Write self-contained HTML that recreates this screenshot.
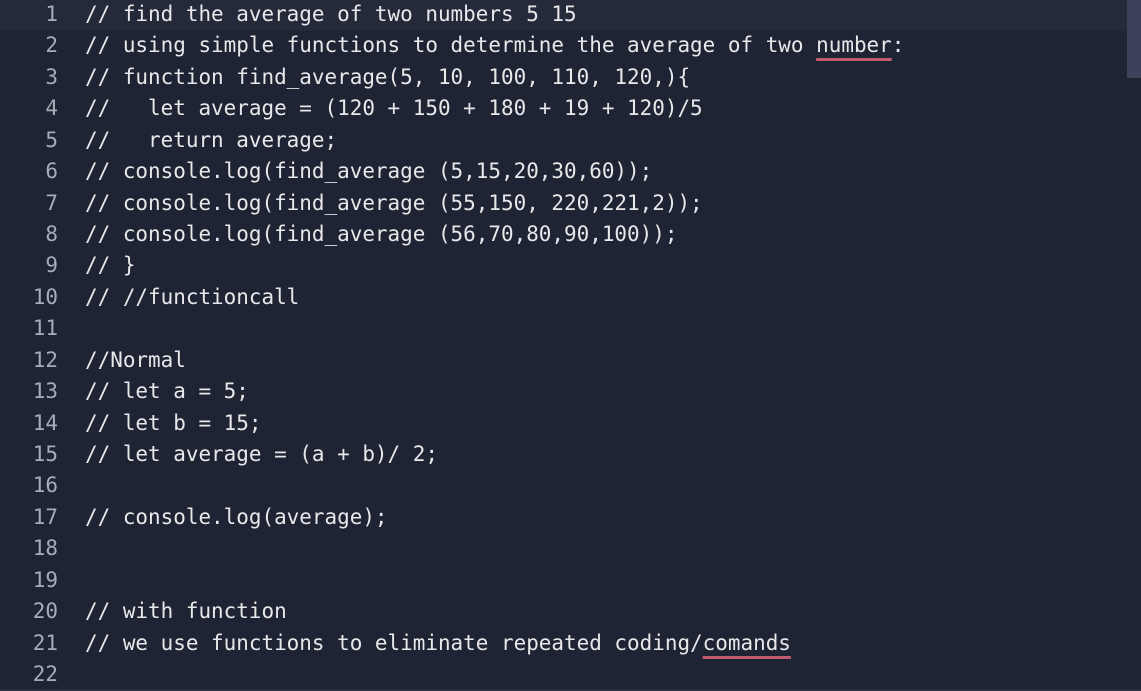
<!DOCTYPE html>
<html><head><meta charset="utf-8"><style>
html,body{margin:0;padding:0;width:1141px;height:691px;overflow:hidden;background:#1e2433;}
.hl{position:absolute;left:0;top:0;width:1127px;height:31px;background:#252a3b;}
.sb{position:absolute;left:1127px;top:0;width:14px;height:78px;background:#3b4259;}
.bot{position:absolute;left:0;top:689px;width:1141px;height:2px;background:#2b3142;}
.ln{position:absolute;left:0;width:58px;text-align:right;color:#a7adb8;}
.tx{position:absolute;left:85px;color:#e8e8ea;white-space:pre;}
.ln,.tx{font-family:"DejaVu Sans Mono","Liberation Mono",monospace;font-size:20.95px;line-height:31.43px;height:31.43px;margin-top:1px;}
.u{text-decoration:underline;text-decoration-color:#c05a6e;text-decoration-thickness:3px;text-underline-offset:6px;}
</style></head><body>
<div class="hl"></div><div class="sb"></div><div class="bot"></div>
<div class="ln" style="top:-2px">1</div><div class="tx" style="top:-2px">// find the average of two numbers 5 15</div>
<div class="ln" style="top:29.4px">2</div><div class="tx" style="top:29.4px">// using simple functions to determine the average of two <span class="u">number</span>:</div>
<div class="ln" style="top:60.9px">3</div><div class="tx" style="top:60.9px">// function find_average(5, 10, 100, 110, 120,){</div>
<div class="ln" style="top:92.3px">4</div><div class="tx" style="top:92.3px">//   let average = (120 + 150 + 180 + 19 + 120)/5</div>
<div class="ln" style="top:123.7px">5</div><div class="tx" style="top:123.7px">//   return average;</div>
<div class="ln" style="top:155.2px">6</div><div class="tx" style="top:155.2px">// console.log(find_average (5,15,20,30,60));</div>
<div class="ln" style="top:186.6px">7</div><div class="tx" style="top:186.6px">// console.log(find_average (55,150, 220,221,2));</div>
<div class="ln" style="top:218px">8</div><div class="tx" style="top:218px">// console.log(find_average (56,70,80,90,100));</div>
<div class="ln" style="top:249.4px">9</div><div class="tx" style="top:249.4px">// }</div>
<div class="ln" style="top:280.9px">10</div><div class="tx" style="top:280.9px">// //functioncall</div>
<div class="ln" style="top:312.3px">11</div>
<div class="ln" style="top:343.7px">12</div><div class="tx" style="top:343.7px">//Normal</div>
<div class="ln" style="top:375.2px">13</div><div class="tx" style="top:375.2px">// let a = 5;</div>
<div class="ln" style="top:406.6px">14</div><div class="tx" style="top:406.6px">// let b = 15;</div>
<div class="ln" style="top:438px">15</div><div class="tx" style="top:438px">// let average = (a + b)/ 2;</div>
<div class="ln" style="top:469.4px">16</div>
<div class="ln" style="top:500.9px">17</div><div class="tx" style="top:500.9px">// console.log(average);</div>
<div class="ln" style="top:532.3px">18</div>
<div class="ln" style="top:563.7px">19</div>
<div class="ln" style="top:595.2px">20</div><div class="tx" style="top:595.2px">// with function</div>
<div class="ln" style="top:626.6px">21</div><div class="tx" style="top:626.6px">// we use functions to eliminate repeated coding/<span class="u">comands</span></div>
<div class="ln" style="top:658px">22</div>
</body></html>
